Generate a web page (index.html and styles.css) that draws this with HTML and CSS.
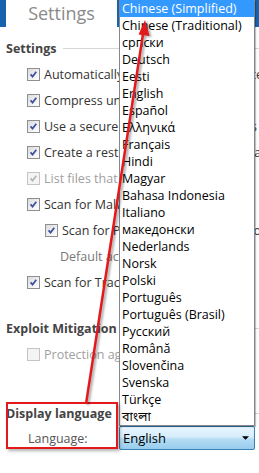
FILE: index.html
```html
<!DOCTYPE html>
<html>
<head>
<meta charset="utf-8">
<link rel="stylesheet" href="styles.css">
</head>
<body>
<div class="app">
  <header class="topbar"><div class="tab">Settings</div></header>
  <main class="content">
    <section class="group">
      <h2 class="group-title">Settings</h2>
      <div class="row"><span class="cb"><svg viewBox="0 0 13 13"><path d="M3 6.3 5.4 9 9.8 3.2"/></svg></span><span>Automatically quarantine detected items</span></div>
      <div class="row"><span class="cb"><svg viewBox="0 0 13 13"><path d="M3 6.3 5.4 9 9.8 3.2"/></svg></span><span>Compress unused database files</span></div>
      <div class="row"><span class="cb"><svg viewBox="0 0 13 13"><path d="M3 6.3 5.4 9 9.8 3.2"/></svg></span><span>Use a secure connection for updates</span></div>
      <div class="row"><span class="cb"><svg viewBox="0 0 13 13"><path d="M3 6.3 5.4 9 9.8 3.2"/></svg></span><span>Create a restore point before removal</span></div>
      <div class="row disabled"><span class="cb"><svg viewBox="0 0 13 13"><path d="M3 6.3 5.4 9 9.8 3.2"/></svg></span><span>List files that were skipped</span></div>
      <div class="row"><span class="cb"><svg viewBox="0 0 13 13"><path d="M3 6.3 5.4 9 9.8 3.2"/></svg></span><span>Scan for Malware in archives</span></div>
      <div class="row indent"><span class="cb"><svg viewBox="0 0 13 13"><path d="M3 6.3 5.4 9 9.8 3.2"/></svg></span><span>Scan for Potentially Unwanted Programs</span></div>
      <div class="row note">Default action: quarantine</div>
      <div class="row"><span class="cb"><svg viewBox="0 0 13 13"><path d="M3 6.3 5.4 9 9.8 3.2"/></svg></span><span>Scan for Tracking cookies</span></div>
    </section>
    <section class="group exploit">
      <h2 class="group-title">Exploit Mitigation</h2>
      <div class="row disabled"><span class="cb empty"></span><span>Protection against exploits</span></div>
    </section>
    <section class="group display">
      <h2 class="group-title">Display language</h2>
      <div class="lang-row">
        <span class="lang-label">Language:</span>
        <div class="combo"><span>English</span><svg class="combo-arrow" viewBox="0 0 8 4"><path d="M0 0h8L4 4z"/></svg></div>
      </div>
    </section>
  </main>

  <ul class="lang-list">
    <li class="selected">Chinese (Simplified)</li>
    <li>Chinese (Traditional)</li>
    <li>српски</li>
    <li>Deutsch</li>
    <li>Eesti</li>
    <li>English</li>
    <li>Español</li>
    <li>Ελληνικά</li>
    <li>Français</li>
    <li>Hindi</li>
    <li>Magyar</li>
    <li>Bahasa Indonesia</li>
    <li>Italiano</li>
    <li>македонски</li>
    <li>Nederlands</li>
    <li>Norsk</li>
    <li>Polski</li>
    <li>Português</li>
    <li>Português (Brasil)</li>
    <li>Русский</li>
    <li>Română</li>
    <li>Slovenčina</li>
    <li>Svenska</li>
    <li>Türkçe</li>
    <li>বাংলা</li>
  </ul>

  <div class="annot-box"></div>
  <svg class="annot-arrow" viewBox="0 0 259 473">
    <line x1="86" y1="404" x2="143" y2="34"/>
    <polygon points="145,20 149.5,36 138.5,34.5"/>
  </svg>
</div>
</body>
</html>
```

FILE: styles.css
```css
html, body {
  margin: 0;
  padding: 0;
}

body {
  width: 259px;
  height: 473px;
  overflow: hidden;
  background: #fff;
  font-family: "Open Sans", "Noto Sans", "Noto Sans Bengali", sans-serif;
  font-size: 12px;
  color: #333;
}

.app {
  position: relative;
  width: 259px;
  height: 473px;
  overflow: hidden;
}

.topbar {
  height: 27px;
  background: #1763ad;
  padding-left: 6px;
  display: flex;
}

.tab {
  width: 111px;
  background: #fff;
  color: #8a8a8a;
  font-size: 18px;
  display: flex;
  align-items: center;
  justify-content: center;
  padding-bottom: 1px;
  box-sizing: border-box;
}

.content {
  padding-top: 8px;
}

.group-title {
  margin: 0;
  height: 26px;
  display: flex;
  align-items: center;
  gap: 7px;
  padding-left: 6px;
  font-size: 12.5px;
  font-weight: bold;
  color: #444;
  white-space: nowrap;
}

.group-title::after {
  content: "";
  flex: 1;
  height: 1px;
  background: #d6d6d6;
}

.row {
  height: 26px;
  display: flex;
  align-items: center;
  gap: 4px;
  padding-left: 27px;
  white-space: nowrap;
  font-size: 12.5px;
  color: #333;
}

.row.indent {
  padding-left: 45px;
}

.row.note {
  padding-left: 60px;
  color: #777;
}

.row.disabled {
  color: #a0a0a0;
}

.cb {
  flex: none;
  width: 13px;
  height: 13px;
  box-sizing: border-box;
  border: 1px solid #8f8f8f;
  background: linear-gradient(135deg, #dcdcdc, #ffffff);
  display: flex;
}

.cb svg {
  width: 11px;
  height: 11px;
}

.cb path {
  fill: none;
  stroke: #3d4f9f;
  stroke-width: 2;
}

.row.disabled .cb {
  border-color: #c4c4c4;
  background: #f4f4f4;
}

.row.disabled .cb path {
  stroke: #b5b5b5;
}

.exploit {
  margin-top: 20px;
}

.display {
  margin-top: 33px;
}

.lang-row {
  height: 24px;
  display: flex;
  align-items: center;
  padding-left: 28px;
}

.lang-label {
  width: 91px;
  color: #555;
  font-size: 12.5px;
}

.combo {
  width: 136px;
  height: 24px;
  box-sizing: border-box;
  border: 1px solid #3c7fb1;
  border-radius: 2px;
  background: linear-gradient(#e8f5fd, #d6eefb 45%, #b4dcf4 55%, #98cdee);
  display: flex;
  align-items: center;
  justify-content: space-between;
  padding: 0 5px 0 3px;
  font-size: 13px;
  color: #000;
}

.combo-arrow {
  width: 7px;
  height: 4px;
}

.combo-arrow path {
  fill: #000;
}

.lang-list {
  position: absolute;
  left: 119px;
  top: 0;
  width: 136px;
  margin: 0;
  padding: 0;
  list-style: none;
  box-sizing: border-box;
  background: #fff;
  border: 1px solid #828790;
  border-top: none;
  box-shadow: 1px 1px 1px rgba(0, 0, 0, 0.25);
}

.lang-list li {
  height: 17px;
  line-height: 17px;
  padding-left: 2px;
  font-size: 12.5px;
  color: #000;
  white-space: nowrap;
}

.lang-list li.selected {
  background: #3399ff;
  color: #fff;
}

.annot-box {
  position: absolute;
  left: 6px;
  top: 402px;
  width: 112px;
  height: 47px;
  box-sizing: border-box;
  border: 2px solid #e3191c;
  box-shadow: 2px 2px 3px rgba(0, 0, 0, 0.3);
}

.annot-arrow {
  position: absolute;
  left: 0;
  top: 0;
  width: 259px;
  height: 473px;
  pointer-events: none;
  filter: drop-shadow(2px 1px 1px rgba(0, 0, 0, 0.35));
}

.annot-arrow line {
  stroke: #e3191c;
  stroke-width: 2.5;
}

.annot-arrow polygon {
  fill: #e3191c;
}
```
